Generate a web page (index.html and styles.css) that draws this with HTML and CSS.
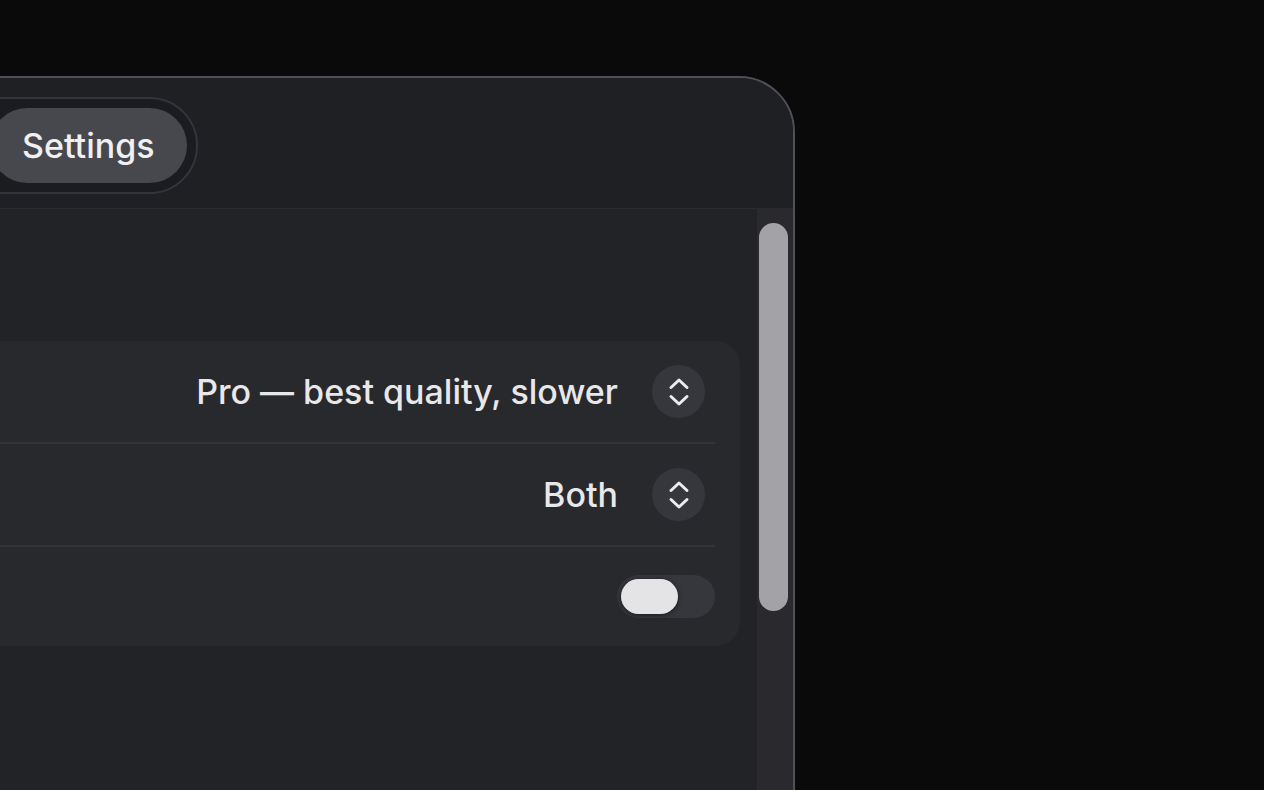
FILE: index.html
```html
<!DOCTYPE html>
<html lang="en">
<head>
<meta charset="utf-8">
<title>Settings</title>
<link rel="stylesheet" href="styles.css">
</head>
<body>
<div class="stage">
  <div class="window">
    <header class="header">
      <div class="segmented">
        <div class="seg-spacer"></div>
        <div class="seg-item active">Settings</div>
      </div>
    </header>
    <div class="body">
      <main class="content">
        <section class="card">
          <div class="row">
            <span class="value">Pro — best quality, slower</span>
            <button class="stepper" aria-label="Change">
              <svg viewBox="0 0 22 30" width="22" height="30"><path d="M3 10.5 L11 3 L19 10.5 M3 19.5 L11 27 L19 19.5" fill="none" stroke="#ececee" stroke-width="3" stroke-linecap="round" stroke-linejoin="round"/></svg>
            </button>
          </div>
          <div class="row">
            <span class="value">Both</span>
            <button class="stepper" aria-label="Change">
              <svg viewBox="0 0 22 30" width="22" height="30"><path d="M3 10.5 L11 3 L19 10.5 M3 19.5 L11 27 L19 19.5" fill="none" stroke="#ececee" stroke-width="3" stroke-linecap="round" stroke-linejoin="round"/></svg>
            </button>
          </div>
          <div class="row last">
            <div class="toggle"><div class="knob"></div></div>
          </div>
        </section>
      </main>
      <aside class="scrolltrack"><div class="thumb"></div></aside>
    </div>
  </div>
</div>
</body>
</html>
```
FILE: styles.css
```css
html, body {
  margin: 0;
  padding: 0;
  height: 790px;
  overflow: hidden;
  background: #0a0a0a;
  font-family: Inter, "Noto Sans", "Liberation Sans", sans-serif;
  color: #ececee;
}

.stage {
  padding-top: 76px;
}

.window {
  margin-left: -405px;
  width: 1200px;
  height: 716px;
  box-sizing: border-box;
  border: 2px solid #505156;
  border-radius: 0 56px 0 0;
  background: #222327;
  overflow: hidden;
  display: flex;
  flex-direction: column;
}

.header {
  flex: none;
  height: 131px;
  box-sizing: border-box;
  padding: 19px 0 0 232px;
  background: #1f2024;
  border-bottom: 1px solid #2a2b31;
  display: flex;
  align-items: flex-start;
}

.segmented {
  display: flex;
  padding: 9px;
  border: 2px solid #33353d;
  border-radius: 50px;
  background: #1b1c20;
}

.seg-spacer {
  width: 150px;
}

.seg-item {
  height: 75px;
  line-height: 75px;
  padding: 0 32px;
  border-radius: 38px;
  font-size: 34px;
  font-weight: 500;
  color: #f0f0f2;
}

.seg-item.active {
  background: #47484d;
}

.body {
  flex: 1;
  display: flex;
  min-height: 0;
}

.content {
  flex: 1;
  padding: 132px 17px 0 103px;
}

.card {
  background: #28292d;
  border-radius: 24px;
  padding-right: 25px;
}

.row {
  height: 101px;
  display: flex;
  align-items: center;
  justify-content: flex-end;
  border-bottom: 2px solid #333439;
}

.row.last {
  height: 99px;
  border-bottom: none;
}

.value {
  font-size: 34px;
  font-weight: 500;
  color: #e8e8ea;
  margin-right: 34px;
}

.stepper {
  width: 53px;
  height: 53px;
  margin-right: 10px;
  border: none;
  padding: 0;
  border-radius: 50%;
  background: #36373c;
  display: flex;
  align-items: center;
  justify-content: center;
}

.toggle {
  width: 98px;
  height: 43px;
  box-sizing: border-box;
  padding: 4px;
  border-radius: 22px;
  background: #36373c;
  display: flex;
  align-items: center;
}

.knob {
  width: 57px;
  height: 35px;
  border-radius: 18px;
  background: #e4e4e7;
  box-shadow: 0 1px 5px rgba(0, 0, 0, 0.55);
}

.scrolltrack {
  flex: none;
  width: 36px;
  background: #29292e;
}

.thumb {
  margin: 14px 0 0 2px;
  width: 29px;
  height: 388px;
  border-radius: 15px;
  background: #a2a2a7;
}
```
